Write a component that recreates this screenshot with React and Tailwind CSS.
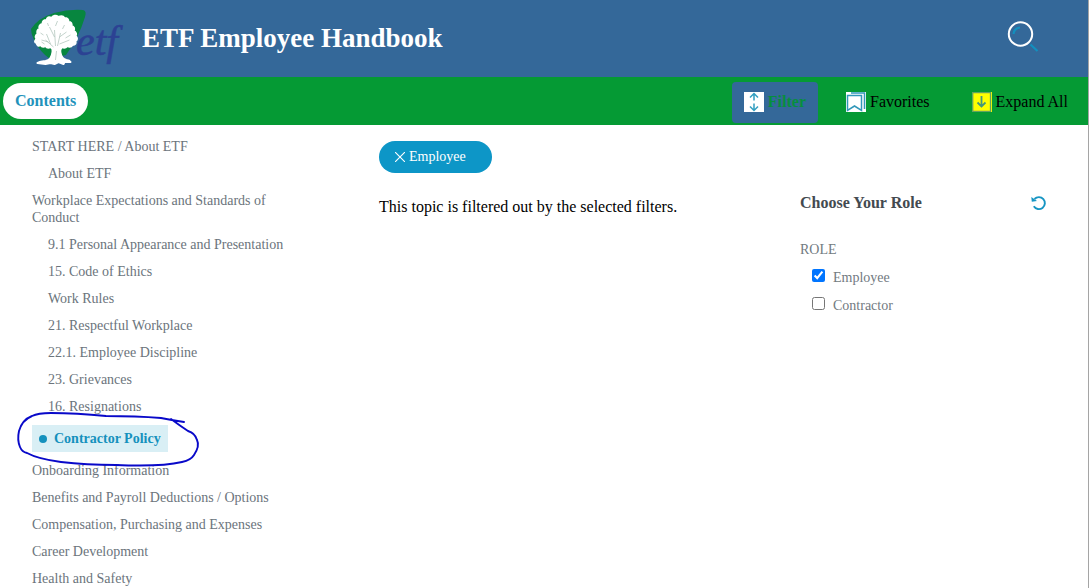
import { useState } from "react";

const topics = [
  { title: "START HERE / About ETF" },
  { title: "About ETF", nested: true },
  { title: "Workplace Expectations and Standards of Conduct" },
  { title: "9.1 Personal Appearance and Presentation", nested: true },
  { title: "15. Code of Ethics", nested: true },
  { title: "Work Rules", nested: true },
  { title: "21. Respectful Workplace", nested: true },
  { title: "22.1. Employee Discipline", nested: true },
  { title: "23. Grievances", nested: true },
  { title: "16. Resignations", nested: true },
  { title: "Contractor Policy", current: true },
  { title: "Onboarding Information" },
  { title: "Benefits and Payroll Deductions / Options" },
  { title: "Compensation, Purchasing and Expenses" },
  { title: "Career Development" },
  { title: "Health and Safety" },
];

function Logo() {
  return (
    <svg viewBox="0 0 96 60" className="h-[60px] w-24 shrink-0 overflow-visible" role="img" aria-label="ETF logo">
      <path d="M1 21Q8 10 24 5Q39 1 53 2Q57 3 55 9Q49 29 36 47L20 51Q10 44 4 32Q1 26 1 21Z" fill="#07863f" />
      <g transform="translate(-1.500 1)">
        <path
          d="M24 43Q25 40 22 38Q19 40 17 37Q14 39 12 36Q9 38 8 34Q5 33 8 30Q6 27 9 25Q8 21 11 20Q10 16 14 15Q14 11 18 11Q19 7 23 9Q26 5 30 8Q34 6 36 9Q40 9 40 13Q44 13 43 17Q47 18 45 22Q49 24 47 27Q50 30 47 32Q48 36 44 36Q42 39 39 37Q36 40 34 38Q31 40 32 44Q33 50 38 51Q41 51 42 53L36 53L35 55L30 53L26 55L22 54L17 55L9 54Q10 53 17 52Q23 51 24 43Z"
          fill="#fff" stroke="#fff" strokeWidth="2" strokeLinejoin="round"
        />
        <path
          d="M25 38L17 31M20 33L13 31M22 35L18 25M27 37L26 21M26 28L21 18M29 37L32 24M31 28L38 23M31 35L41 31M15 26L12 24M34 20L36 16M27 17L29 12M20 17L19 14M27 51L28 42M16 35L13 33M37 29L42 26"
          fill="none" stroke="#9bb5aa" strokeWidth="0.6"
        />
      </g>
      <text x="46" y="47" fill="#2c4293" stroke="#2c4293" strokeWidth="0.5" fontFamily="Liberation Serif, serif" fontStyle="italic" fontSize="42">etf</text>
    </svg>
  );
}

function SearchIcon() {
  return (
    <svg viewBox="0 0 32 32" className="size-8" fill="none" aria-hidden="true">
      <circle cx="13.5" cy="14" r="11.7" stroke="#fff" strokeWidth="2" />
      <path d="M6.500 14Q7 8.500 13 7.500M23.500 24.500L30.500 31" stroke="#1290bf" strokeWidth="2.200" />
    </svg>
  );
}

function FilterIcon() {
  return (
    <svg viewBox="0 0 20 20" className="size-5 bg-white" fill="none" stroke="#329fc1" strokeWidth="1.5" aria-hidden="true">
      <path d="M10 1.5V8.5M6 5.5L10 1.5L14 5.5M10 11.5V18.5M6 14.5L10 18.5L14 14.5" />
    </svg>
  );
}

function FavoritesIcon() {
  return (
    <svg viewBox="0 0 20 20" className="size-5 bg-white" fill="none" stroke="#3197b9" strokeWidth="1.5" aria-hidden="true">
      <path d="M1.500 3.500H15.500V18.500L8.500 14L1.500 18.500ZM5 1H18.500V17" />
    </svg>
  );
}

function ExpandIcon() {
  return (
    <svg viewBox="0 0 20 20" className="size-5 bg-[#ffff00]" fill="none" aria-hidden="true">
      <path d="M.7 .7H18.5V19.3H.7Z" stroke="#63a45e" strokeWidth="1.3" />
      <path d="M9.500 4V14.500M5.500 10.500L9.500 14.500L13.500 10.500" stroke="#45977b" strokeWidth="1.8" />
    </svg>
  );
}

function ResetIcon() {
  return (
    <svg viewBox="0 0 16 16" className="size-4" fill="none" aria-hidden="true">
      <path d="M3.500 4A6 6 0 1 1 2.800 11.300" stroke="#1695c3" strokeWidth="1.9" />
      <path d="M.3 2L.8 6.800L6 6Z" fill="#1695c3" />
    </svg>
  );
}

function Annotation() {
  return (
    <svg viewBox="0 0 184 56" className="pointer-events-none absolute -top-3 -left-4 h-14 w-[184px] overflow-visible" fill="none" aria-hidden="true">
      <path
        d="M168 9Q155 7 145 5Q120 3 90 3Q60 0 35 0Q22 0 16 3Q6 7 3 18Q1 27 4 34Q6 39 11 40Q22 46 45 49Q70 52 100 52Q145 54 166 49Q175 47 178 42Q184 33 181 27Q179 20 172 18Q163 12 155 6"
        stroke="#0909c9" strokeWidth="1.9" strokeLinecap="round" strokeLinejoin="round"
      />
    </svg>
  );
}

function Topic({ title, nested, current }) {
  if (current) {
    return (
      <li className="relative self-start">
        <a href="#contractor-policy" aria-current="page" className="flex items-center gap-[7px] bg-[#d9eff5] px-[7px] py-[5px] font-bold text-[#1591bd]">
          <span className="size-2 rounded-full bg-[#1591bd]" />
          {title}
        </a>
        <Annotation />
      </li>
    );
  }
  return (
    <li className={nested ? "pl-4" : ""}>
      <a href="#topic" className="block">{title}</a>
    </li>
  );
}

export default function App() {
  const [roles, setRoles] = useState({ Employee: true, Contractor: false });
  const toggle = (role) => setRoles({ ...roles, [role]: !roles[role] });

  return (
    <div className="min-h-screen border-r border-[#a5a5a5] bg-white font-['Liberation_Serif',serif] text-base text-black">
      <header className="flex h-[77px] items-center bg-[#346899] pr-[49px] pb-[2px] pl-[30px]">
        <Logo />
        <h1 className="ml-4 text-[27px] leading-8 font-bold text-white">ETF Employee Handbook</h1>
        <button aria-label="Search" className="mb-1 ml-auto"><SearchIcon /></button>
      </header>

      <div className="flex h-12 items-center bg-[#059a34] pr-5 pl-[3px]">
        <button className="h-9 rounded-full bg-white px-3 font-bold text-[#2292bb]">Contents</button>
        <div className="ml-auto flex items-center pt-[2px]">
          <button className="flex h-[41px] items-center gap-1 rounded bg-[#346899] px-3 font-bold text-[#078e3e]">
            <FilterIcon />Filter
          </button>
          <button className="ml-7 flex items-center gap-1"><FavoritesIcon />Favorites</button>
          <button className="ml-[42px] flex items-center gap-1"><ExpandIcon />Expand All</button>
        </div>
      </div>

      <div className="flex">
        <nav aria-label="Contents" className="w-[379px] shrink-0 pt-[13px] pr-[84px] pl-8">
          <ul className="flex flex-col gap-[10px] text-sm leading-[17px] text-[#6b747c]">
            {topics.map((topic) => <Topic key={topic.title} {...topic} />)}
          </ul>
        </nav>

        <main className="flex-1 pt-4">
          <button className="flex h-8 items-center gap-1 rounded-full bg-[#0d96c7] pr-[26px] pl-4 text-sm text-white">
            <svg viewBox="0 0 10 10" className="size-[10px]" stroke="currentColor" strokeWidth="1.1" aria-hidden="true">
              <path d="M0 0L10 10M10 0L0 10" />
            </svg>
            Employee
          </button>
          <p className="mt-[22px]">This topic is filtered out by the selected filters.</p>
        </main>

        <aside className="w-72 shrink-0 pt-[66px] pr-[41px]">
          <div className="flex items-center justify-between">
            <h2 className="font-bold text-[#434a50]">Choose Your Role</h2>
            <button aria-label="Reset filters"><ResetIcon /></button>
          </div>
          <fieldset className="mt-[25px] text-sm text-[#727a81]">
            <legend className="leading-5">ROLE</legend>
            <div className="mt-2 flex flex-col gap-2 pl-3">
              {Object.keys(roles).map((role) => (
                <label key={role} className="flex items-start gap-2 leading-5">
                  <input type="checkbox" checked={roles[role]} onChange={() => toggle(role)} className="mt-px size-[13px]" />
                  {role}
                </label>
              ))}
            </div>
          </fieldset>
        </aside>
      </div>
    </div>
  );
}
